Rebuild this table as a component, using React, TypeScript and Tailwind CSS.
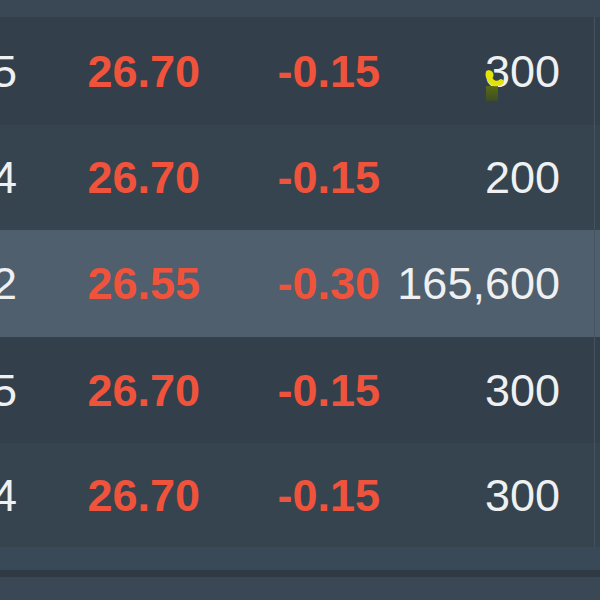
import React from "react";

type Row = { a: string; b: string; c: string; d: string; bg: string; h: string };

const rows: Row[] = [
  { a: "5", b: "26.70", c: "-0.15", d: "300", bg: "bg-[#333f4a]", h: "h-[108px]" },
  { a: "4", b: "26.70", c: "-0.15", d: "200", bg: "bg-[#36444f]", h: "h-[105px]" },
  { a: "2", b: "26.55", c: "-0.30", d: "165,600", bg: "bg-[#4f5f6d]", h: "h-[107px]" },
  { a: "5", b: "26.70", c: "-0.15", d: "300", bg: "bg-[#333f4a]", h: "h-[106px]" },
  { a: "4", b: "26.70", c: "-0.15", d: "300", bg: "bg-[#36444f]", h: "h-[104px]" },
];

export default function App() {
  return (
    <div
      className="w-[600px] h-[600px] overflow-hidden bg-[#3a4856] flex flex-col"
      style={{ fontFamily: '"Liberation Sans", Arial, sans-serif' }}
    >
      <div className="h-[17px] bg-[#3a4856] shrink-0" />
      {rows.map((r, i) => (
        <div
          key={i}
          className={`${r.h} shrink-0 flex items-center text-[45px] leading-none ${r.bg} relative`}
        >
          <div className="w-[17px] shrink-0 flex justify-end whitespace-nowrap text-[#eef0f2]">
            {r.a}
          </div>
          <div className="w-[183px] shrink-0 flex justify-end whitespace-nowrap font-bold text-[#f0533c]">
            {r.b}
          </div>
          <div className="w-[180px] shrink-0 flex justify-end whitespace-nowrap font-bold text-[#f0533c]">
            {r.c}
          </div>
          <div className="w-[180px] shrink-0 flex justify-end whitespace-nowrap text-[#eef0f2]">
            {r.d}
          </div>
          <div className="flex-1 self-stretch flex justify-end">
            <div className="w-[6px] self-stretch border-l border-[#45535f]" />
          </div>
          {i === 0 && (
            <svg
              className="absolute left-[482px] top-[35px]"
              width="22"
              height="52"
              viewBox="0 0 22 52"
            >
              <defs>
                <linearGradient id="olive" x1="0" y1="0" x2="0" y2="1">
                  <stop offset="0" stopColor="#5a6a10" />
                  <stop offset="1" stopColor="#3e4c28" />
                </linearGradient>
              </defs>
              <rect x="4" y="34" width="12" height="15" fill="url(#olive)" />
              <path
                d="M6.5 21 Q7 30 13 31.5 Q17 32 19 30"
                fill="none"
                stroke="#e4e40c"
                strokeWidth="5.5"
                strokeLinecap="round"
              />
              <ellipse cx="7.5" cy="23" rx="4" ry="4.5" fill="#e4e40c" />
            </svg>
          )}
        </div>
      ))}
      <div className="h-[23px] shrink-0 bg-[#3a4958]" />
      <div className="h-[7px] shrink-0 bg-[#2f3a44]" />
      <div className="flex-1 bg-[#3a4855]" />
    </div>
  );
}
